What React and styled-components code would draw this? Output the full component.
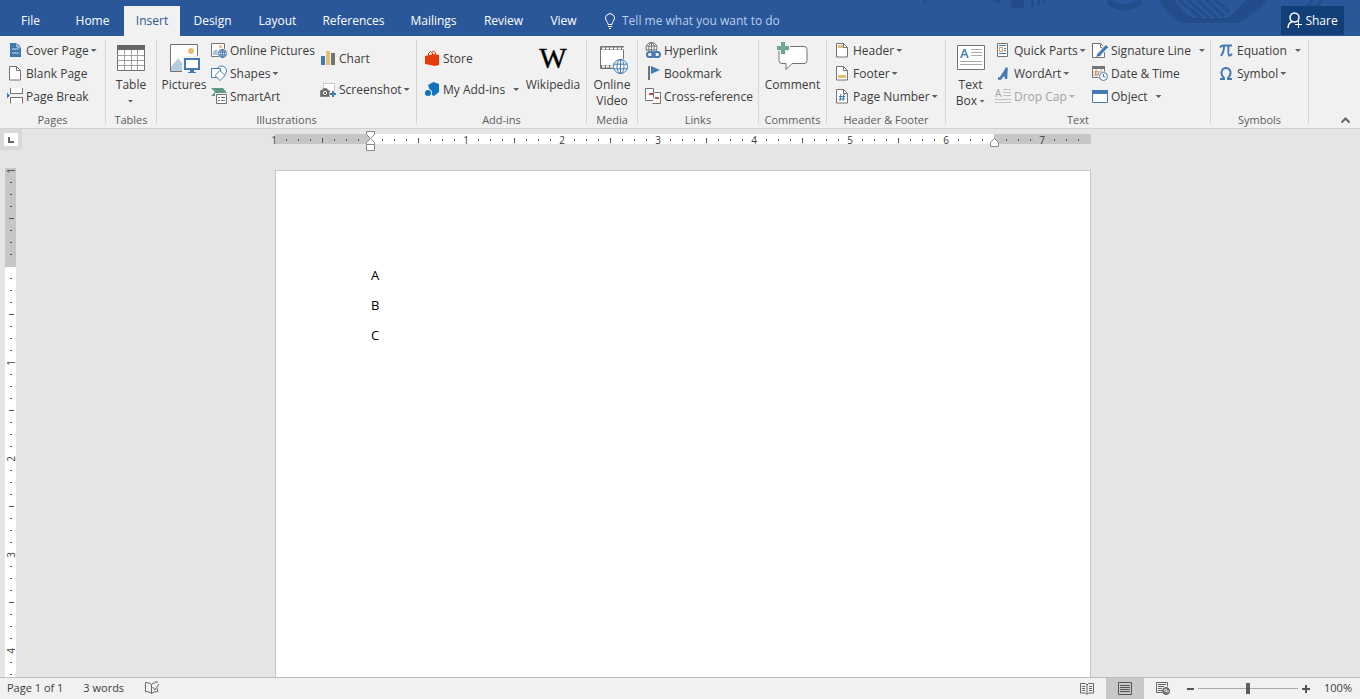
import React from 'react';
import styled, { createGlobalStyle } from 'styled-components';

const BLUE = '#4579b2';
const GRAY = '#737373';

const GlobalStyle = createGlobalStyle`
  * { box-sizing: border-box; }
  body {
    margin: 0;
    background: #e5e5e5;
    color: #3c3c3c;
    font: 12px/16px 'Open Sans', 'Noto Sans', sans-serif;
  }
  button, input { font: inherit; color: inherit; }
`;

const Window = styled.div`
  display: flex;
  flex-direction: column;
  height: 100vh;
  overflow: hidden;
`;

const TitleBar = styled.header`
  position: relative;
  display: flex;
  flex: none;
  align-items: stretch;
  height: 36px;
  padding: 6px 16px 0 0;
  background: #2a579a;
  color: #fff;
`;

const Ornament = styled.svg`
  position: absolute;
  top: 0;
  right: 0;
  width: 440px;
  height: 36px;
`;

const TabList = styled.nav`
  display: flex;
`;

const Tab = styled.button`
  width: ${(p) => p.$width}px;
  padding: 0;
  border: 0;
  white-space: nowrap;
  background: ${(p) => (p.$active ? '#f1f1f1' : 'transparent')};
  color: ${(p) => (p.$active ? '#2a579a' : '#fff')};
`;

const TellMe = styled.label`
  display: flex;
  align-items: center;
  gap: 5px;
  padding-left: 13px;
`;

const TellMeInput = styled.input`
  width: 200px;
  padding: 0;
  border: 0;
  outline: 0;
  background: transparent;
  &::placeholder { color: #b9cdea; opacity: 1; }
`;

const ShareButton = styled.button`
  position: relative;
  display: flex;
  align-items: center;
  justify-content: center;
  gap: 2px;
  width: 63px;
  height: 29px;
  margin-left: auto;
  padding: 0;
  border: 0;
  background: #123f78;
  color: #fff;
`;

const Ribbon = styled.div`
  display: flex;
  flex: none;
  height: 93px;
  background: #f1f1f1;
  border-bottom: 1px solid #d2d2d2;
`;

const Group = styled.section`
  position: relative;
  display: flex;
  flex: none;
  flex-direction: column;
  width: ${(p) => p.$width}px;
  padding: 3px 1px 0 0;
  &::after {
    content: '';
    position: absolute;
    top: 4px;
    right: 0;
    width: 1px;
    height: 84px;
    background: #d5d5d5;
  }
`;

const GroupBody = styled.div`
  display: flex;
  height: 73px;
  padding-left: ${(p) => p.$inset || 0}px;
`;

const GroupName = styled.h2`
  margin: 0;
  color: #5c5c5c;
  font-size: 11px;
  font-weight: 400;
  line-height: 16px;
  text-align: center;
  white-space: nowrap;
`;

const Column = styled.div`
  display: flex;
  flex: none;
  flex-direction: column;
  width: ${(p) => p.$width}px;
  padding-top: ${(p) => (p.$roomy ? 4 : 0)}px;
`;

const SmallButton = styled.button`
  display: flex;
  flex: none;
  align-items: center;
  gap: 3px;
  height: ${(p) => (p.$roomy ? 31 : 23)}px;
  padding: 0;
  border: 0;
  background: transparent;
  color: ${(p) => (p.disabled ? '#a3a3a3' : 'inherit')};
  white-space: nowrap;
  svg { flex: none; }
`;

const Caret = styled.i`
  width: 6px;
  height: 3px;
  margin-left: ${(p) => (p.$split ? 5 : -1)}px;
  background: currentColor;
  opacity: 0.8;
  clip-path: polygon(0 0, 100% 0, 50% 100%);
`;

const BigButton = styled.button`
  display: flex;
  flex: none;
  flex-direction: column;
  align-items: center;
  width: ${(p) => p.$width}px;
  padding: 3px 0 0;
  border: 0;
  background: transparent;
  white-space: nowrap;
  svg { flex: none; margin-bottom: 3px; }
`;

const BigLine = styled.span`
  display: flex;
  align-items: center;
  gap: 3px;
  height: 16px;
`;

const CollapseButton = styled.button`
  display: flex;
  align-self: flex-end;
  align-items: center;
  margin: 0 9px 0 auto;
  padding: 4px 0;
  border: 0;
  background: transparent;
`;

const Workspace = styled.main`
  display: grid;
  flex: 1;
  grid-template-columns: 22px 1fr;
  grid-template-rows: 39px minmax(0, 1fr);
  min-height: 0;
  overflow: hidden;
`;

const TabStop = styled.button`
  display: flex;
  align-items: center;
  justify-content: center;
  width: 22px;
  height: 21px;
  padding: 0;
  border: 4px solid #d9d9d9;
  background: #fff;
`;

const RulerRow = styled.div`
  display: flex;
  justify-content: center;
  padding: 5px 16px 0 0;
`;

const Ruler = styled.div`
  position: relative;
  display: flex;
  width: 816px;
  height: 10px;
  background: linear-gradient(to right, #c6c6c6 95px, #fff 95px 719px, #c6c6c6 719px);
`;

const RulerCells = styled.div`
  display: flex;
  margin-left: -7px;
`;

const RulerCell = styled.span`
  display: flex;
  flex: none;
  align-items: center;
  justify-content: center;
  width: 12px;
  height: 12px;
  font-size: 10px;
  line-height: 12px;
`;

const Tick = styled.i`
  width: 1px;
  height: ${(p) => (p.$half ? 5 : 2)}px;
  background: #555;
`;

const Marker = styled.svg`
  position: absolute;
  top: ${(p) => p.$top}px;
  left: ${(p) => p.$left}px;
`;

const SideRuler = styled.div`
  width: 11px;
  height: 100%;
  margin-left: 5px;
  background: linear-gradient(to bottom, #c6c6c6 99px, #fff 99px);
`;

const SideCells = styled.div`
  display: flex;
  flex-direction: column;
  width: 12px;
  margin-top: -3px;
  ${RulerCell} { transform: rotate(-90deg); }
`;

const PageArea = styled.div`
  display: flex;
  justify-content: center;
  min-height: 0;
  padding: 2px 16px 0 0;
`;

const Paper = styled.article`
  width: 816px;
  padding: 89px 95px 0;
  border: 1px solid #c6c6c6;
  border-bottom: 0;
  background: #fff;
  color: #000;
  font-size: 13px;
  line-height: 30px;
  p { margin: 0; }
`;

const StatusBar = styled.footer`
  display: flex;
  flex: none;
  align-items: center;
  height: 22px;
  padding: 0 8px 0 7px;
  border-top: 1px solid #bdbdbd;
  background: #f1f1f1;
  font-size: 11px;
`;

const StatusButton = styled.button`
  display: flex;
  align-items: center;
  margin-right: 20px;
  padding: 0 0 2px;
  border: 0;
  background: transparent;
  white-space: nowrap;
`;

const ViewSwitch = styled.div`
  display: flex;
  height: 21px;
  margin-left: auto;
`;

const ViewButton = styled.button`
  display: flex;
  align-items: center;
  justify-content: center;
  width: 38px;
  padding: 0;
  border: 0;
  background: ${(p) => (p.$active ? '#c8c8c8' : 'transparent')};
`;

const ZoomControls = styled.div`
  display: flex;
  align-items: center;
  gap: 4px;
  padding-left: 5px;
`;

const ZoomStep = styled.button`
  display: flex;
  padding: 0;
  border: 0;
  background: transparent;
`;

const ZoomRange = styled.input`
  width: 100px;
  height: 12px;
  margin: 0;
  appearance: none;
  background: linear-gradient(#a9a9a9, #a9a9a9) center / 100% 1px no-repeat;
  &::-webkit-slider-thumb {
    appearance: none;
    width: 4px;
    height: 11px;
    background: #5e5e5e;
  }
`;

const ZoomValue = styled.button`
  width: 30px;
  margin-left: 8px;
  padding: 0 0 2px;
  border: 0;
  background: transparent;
  text-align: right;
  white-space: nowrap;
`;

const Small = ({ children }) => (
  <svg width="16" height="17" viewBox="0 0 16 17" fill="none" aria-hidden="true">{children}</svg>
);
const Big = ({ children }) => (
  <svg width="32" height="32" viewBox="0 0 32 32" fill="none" aria-hidden="true">{children}</svg>
);

const Sheet = ({ children }) => (
  <Small>
    <path d="M2.500 1.500h7l4 4v9.500h-11z" fill="#fff" stroke={GRAY} />
    <path d="M9.500 1.500v4h4" stroke={GRAY} />
    {children}
  </Small>
);

const Globe = ({ cx, cy, r, color = BLUE }) => (
  <g stroke={color} fill="none">
    <circle cx={cx} cy={cy} r={r + 1} fill="#f1f1f1" stroke="none" />
    <circle cx={cx} cy={cy} r={r} fill="#fff" />
    <ellipse cx={cx} cy={cy} rx={r / 2} ry={r} />
    <path d={`M${cx} ${cy - r}v${2 * r}M${cx - r} ${cy - r / 3}h${2 * r}M${cx - r} ${cy + r / 3}h${2 * r}`} />
  </g>
);

const icons = {
  cover: (
    <Small>
      <path d="M3 1h7l4 4v10h-11z" fill="#3f76ad" />
      <path d="M10 1v4h4" stroke="#f1f1f1" />
      <path d="M5 7.500l1.500-1 1.500 1 1.500-1 1.500 1 1-1M5 10.500l1.500 1 1.500-1 1.500 1 1.500-1 1 1" stroke="#dbe8f4" />
    </Small>
  ),
  blank: <Sheet />,
  pageBreak: (
    <Small>
      <path d="M4 0h11v5h-11zM4 10h11v5h-11z" fill="#fff" />
      <path d="M3.500 0v5.500M15.500 0v5.500M3 5.500h13M3.500 15.500v-6M15.500 15.500v-6M3 9.500h13" stroke={GRAY} />
      <path d="M0 4.500l3 3-3 3z" fill={BLUE} />
    </Small>
  ),
  table: (
    <Big>
      <path d="M2.500 3.500h27v25h-27z" fill="#fff" stroke={GRAY} />
      <path d="M2 3h28v5h-28z" fill="#666" />
      <path d="M3 13.500h26M3 18.500h26M3 23.500h26M9.500 8v20M16.500 8v20M22.500 8v20" stroke="#a0a0a0" />
    </Big>
  ),
  pictures: (
    <Big>
      <path d="M2.500 2.500h27v27h-27z" fill="#fff" stroke={GRAY} />
      <circle cx="23" cy="9" r="3" fill="#e8bd72" />
      <path d="M3 25l7-9 6 7v6h-13z" fill="#b9cde1" />
      <path d="M14 14h18v18h-18z" fill="#f1f1f1" />
      <path d="M17 17h14v10h-14z" fill="#fff" stroke={BLUE} strokeWidth="2" />
      <path d="M22 28h4v2h2v1h-8v-1h2z" fill={BLUE} />
    </Big>
  ),
  onlinePictures: (
    <Small>
      <path d="M.5 1.500h13v13h-13z" fill="#fff" stroke={GRAY} />
      <circle cx="9.500" cy="4.500" r="1.500" fill="#e8bd72" />
      <path d="M2 13v-3l3-3 3 4v2z" fill="#a9c2dc" />
      <Globe cx={11.500} cy={11.500} r={4} />
    </Small>
  ),
  shapes: (
    <Small>
      <circle cx="10.500" cy="6" r="5" fill="#fff" stroke={BLUE} />
      <path d="M.5 3.500h9v9h-9z" fill="#fff" stroke={BLUE} />
      <path d="M9 5.500l5 5-5 5-5-5z" fill="#fff" stroke={BLUE} />
    </Small>
  ),
  smartArt: (
    <Small>
      <path d="M0 0h12l4 5-2 3h-14l4-4z" fill="#5c9a83" />
      <path d="M4 5h12v12h-12z" fill="#f1f1f1" />
      <path d="M5.500 6.500h10v9h-10z" fill="#fff" stroke={GRAY} />
      <path d="M7 9.500h2M10 9.500h4M7 12.500h2M10 12.500h4" stroke={GRAY} />
    </Small>
  ),
  chart: (
    <Small>
      <path d="M1 6h4v9h-4z" fill={BLUE} />
      <path d="M6 1h4v14h-4z" fill="#e6bd77" />
      <path d="M11 3h4v12h-4z" fill={GRAY} />
    </Small>
  ),
  screenshot: (
    <Small>
      <path d="M3.500 2.500h11v9h-11z" fill="#fff" stroke="#999" strokeDasharray="1 1" />
      <path d="M0 9h2l1-2h4l1 2h2v7h-10z" fill="#666" stroke="#f1f1f1" strokeWidth=".5" />
      <circle cx="5" cy="12" r="1.700" fill="#666" stroke="#fff" />
      <path d="M12.500 10v6M9.500 13h6" stroke="#f1f1f1" strokeWidth="4" />
      <path d="M13 10v6M10 13h6" stroke={BLUE} strokeWidth="2" />
    </Small>
  ),
  store: (
    <Small>
      <path d="M1 6l9-2 5 1v10l-4 1-10-2z" fill="#e63c0b" />
      <path d="M4.500 6v-2.500l2-2 2 1.500v2M7.500 2.500l2-1.500 2 1.500v2" stroke="#e63c0b" />
    </Small>
  ),
  addins: (
    <Small>
      <path d="M9.500 1l5.500 2v8l-5 4-4-2-1-6-1-3z" fill="#1172bd" />
      <circle cx="4" cy="12" r="4" fill="#f1f1f1" />
      <circle cx="4" cy="12" r="3" fill="#1172bd" />
    </Small>
  ),
  wikipedia: (
    <Big>
      <text x="16" y="26" fill="#000" stroke="#000" strokeWidth=".4" fontFamily="Liberation Serif, serif" fontSize="29" textAnchor="middle">W</text>
    </Big>
  ),
  video: (
    <Big>
      <path d="M4.500 4.500h23v22h-23z" fill="#fff" stroke={GRAY} />
      <path d="M5 6.500h23M5 24.500h23" stroke={GRAY} strokeWidth="3" />
      <path d="M6 6.500h22M6 24.500h22" stroke="#fff" strokeWidth="2" strokeDasharray="3 1" />
      <Globe cx={24.500} cy={24.500} r={7} />
    </Big>
  ),
  hyperlink: (
    <Small>
      <Globe cx={6.500} cy={6} r={5.500} color={GRAY} />
      <path d="M0 9h16v8h-16z" fill="#f1f1f1" />
      <rect x="2" y="10" width="7" height="5" rx="2.500" stroke={BLUE} strokeWidth="2" />
      <rect x="8" y="10" width="7" height="5" rx="2.500" stroke={BLUE} strokeWidth="2" />
      <path d="M6 12.500h5" stroke={BLUE} strokeWidth="2" />
    </Small>
  ),
  bookmark: (
    <Small>
      <path d="M3 1h2v14h-2z" fill={GRAY} />
      <path d="M6 1l9 4-9 4z" fill={BLUE} />
    </Small>
  ),
  crossReference: (
    <Small>
      <path d="M.5.5h8v12h-8z" fill="#fff" stroke={GRAY} />
      <path d="M9.500 4.500h6v11h-8" fill="#fff" stroke={GRAY} />
      <path d="M7 13h2v2h-2z" fill="#fff" />
      <path d="M4 6h4M10 10h4" stroke="#c0504d" strokeWidth="2" />
    </Small>
  ),
  comment: (
    <Big>
      <path d="M5 4.500h22a3 3 0 0 1 3 3v11a3 3 0 0 1-3 3h-12l-6 6v-6h-4a3 3 0 0 1-3-3v-11a3 3 0 0 1 3-3z" fill="#fff" stroke={GRAY} />
      <path d="M3 0h6v3h4v6h-4v4h-6v-4h-3v-6h3z" fill="#f1f1f1" />
      <path d="M4 0h4v4h4v4h-4v4h-4v-4h-4v-4h4z" fill="#71a694" />
    </Big>
  ),
  header: <Sheet><path d="M4 3h5v3h-5z" fill="#e6bd77" /></Sheet>,
  footer: <Sheet><path d="M4 10h8v3h-8z" fill="#e6bd77" /></Sheet>,
  pageNumber: <Sheet><path d="M7 6l-1 7M10 6l-1 7M5 8.500h6M5 11h6" stroke="#3f76ad" /></Sheet>,
  textBox: (
    <Big>
      <path d="M2.500 3.500h27v24h-27z" fill="#fff" stroke={GRAY} />
      <text x="5" y="16" fill={BLUE} fontFamily="Open Sans, sans-serif" fontWeight="600" fontSize="13">A</text>
      <path d="M16 7.500h11M16 10.500h11M16 13.500h11M5 19.500h22M5 22.500h22" stroke="#aaa" />
    </Big>
  ),
  quickParts: (
    <Small>
      <path d="M2.500 1.500h10v13h-10z" fill="#fff" stroke={GRAY} />
      <path d="M4 3.500h7M9 6.500h2M9 8.500h2M4 11.500h7" stroke="#3f76ad" />
      <path d="M4.500 5.500h3v4h-3z" fill="#fff" stroke="#dd9c45" />
    </Small>
  ),
  wordArt: (
    <Small>
      <path d="M3 13.500h2.500L12 3.500M11.500 2.500l-.5 11.500M7 10.500h4" stroke={BLUE} strokeWidth="2.500" />
    </Small>
  ),
  dropCap: (
    <Small>
      <text x="0" y="9" fill="#a3a3a3" fontFamily="Open Sans, sans-serif" fontSize="10">A</text>
      <path d="M8 1.500h8M8 4.500h8M8 7.500h8M0 11.500h16M0 14.500h16" stroke="#c4c4c4" />
    </Small>
  ),
  signature: (
    <Small>
      <path d="M.5 1.500h8l4 4v10h-12z" fill="#fff" stroke={GRAY} />
      <path d="M8.500 1.500v4h4" stroke={GRAY} />
      <path d="M6 13.500L15 4" stroke="#f1f1f1" strokeWidth="5" />
      <path d="M7 12.500L15 4" stroke={BLUE} strokeWidth="3" />
      <path d="M4 15l2-4 3 2.500z" fill={BLUE} />
    </Small>
  ),
  date: (
    <Small>
      <path d="M.5 1.500h12v11h-12z" fill="#fff" stroke={GRAY} />
      <path d="M0 1h13v3h-13z" fill={GRAY} />
      <path d="M1 7h11M1 10h11M4 4v8M9 4v8" stroke="#aaa" />
      <path d="M3.500 6.500h3v3h-3z" stroke="#d8904a" />
      <circle cx="11.500" cy="11.500" r="5" fill="#f1f1f1" />
      <circle cx="11.500" cy="11.500" r="4" fill="#fff" stroke={BLUE} />
      <path d="M11.500 9v3h2" stroke={BLUE} />
    </Small>
  ),
  object: (
    <Small>
      <path d="M.5 2.500h15v12h-15z" fill="#fff" stroke={BLUE} />
      <path d="M0 2h16v4h-16z" fill={BLUE} />
    </Small>
  ),
  equation: (
    <Small>
      <path d="M2 5.500Q3 3.500 5 3.500H14M6 4Q6 10 3 14M10.500 4Q10 13 11 13.500T14 12" stroke={BLUE} strokeWidth="2" />
    </Small>
  ),
  symbol: (
    <Small>
      <path d="M2 14h4v-1Q3 10 3.500 7 4.500 3 8 3t4.500 4q.5 3-2.500 6v1h4" stroke={BLUE} strokeWidth="2" />
    </Small>
  ),
};

function Command({ icon, label, menu, split, roomy, disabled }) {
  return (
    <SmallButton type="button" $roomy={roomy} disabled={disabled}>
      {icons[icon]}
      {label}
      {menu && <Caret $split={split} />}
    </SmallButton>
  );
}

function BigCommand({ icon, lines, width, menu, menuBelow }) {
  return (
    <BigButton type="button" $width={width}>
      {icons[icon]}
      {lines.map((line, i) => (
        <BigLine key={line}>
          {line}
          {menu && i === lines.length - 1 && <Caret />}
        </BigLine>
      ))}
      {menuBelow && <BigLine><Caret /></BigLine>}
    </BigButton>
  );
}

const tabs = [
  ['File', 61], ['Home', 63], ['Insert', 56], ['Design', 65], ['Layout', 65],
  ['References', 87], ['Mailings', 73], ['Review', 67], ['View', 53],
];

const groups = [
  { name: 'Pages', width: 106, inset: 7, parts: [
    { width: 98, items: [
      { icon: 'cover', label: 'Cover Page', menu: true },
      { icon: 'blank', label: 'Blank Page' },
      { icon: 'pageBreak', label: 'Page Break' },
    ] },
  ] },
  { name: 'Tables', width: 51, parts: [{ big: 'table', lines: ['Table'], width: 50, menuBelow: true }] },
  { name: 'Illustrations', width: 260, parts: [
    { big: 'pictures', lines: ['Pictures'], width: 54 },
    { width: 109, items: [
      { icon: 'onlinePictures', label: 'Online Pictures' },
      { icon: 'shapes', label: 'Shapes', menu: true },
      { icon: 'smartArt', label: 'SmartArt' },
    ] },
    { width: 96, roomy: true, items: [
      { icon: 'chart', label: 'Chart' },
      { icon: 'screenshot', label: 'Screenshot', menu: true },
    ] },
  ] },
  { name: 'Add-ins', width: 170, inset: 7, parts: [
    { width: 101, roomy: true, items: [
      { icon: 'store', label: 'Store' },
      { icon: 'addins', label: 'My Add-ins', menu: true, split: true },
    ] },
    { big: 'wikipedia', lines: ['Wikipedia'], width: 56 },
  ] },
  { name: 'Media', width: 51, parts: [{ big: 'video', lines: ['Online', 'Video'], width: 50 }] },
  { name: 'Links', width: 121, inset: 7, parts: [
    { width: 113, items: [
      { icon: 'hyperlink', label: 'Hyperlink' },
      { icon: 'bookmark', label: 'Bookmark' },
      { icon: 'crossReference', label: 'Cross-reference' },
    ] },
  ] },
  { name: 'Comments', width: 68, parts: [{ big: 'comment', lines: ['Comment'], width: 67 }] },
  { name: 'Header & Footer', width: 119, inset: 7, parts: [
    { width: 111, items: [
      { icon: 'header', label: 'Header', menu: true },
      { icon: 'footer', label: 'Footer', menu: true },
      { icon: 'pageNumber', label: 'Page Number', menu: true },
    ] },
  ] },
  { name: 'Text', width: 265, parts: [
    { big: 'textBox', lines: ['Text', 'Box'], width: 49, menu: true },
    { width: 97, items: [
      { icon: 'quickParts', label: 'Quick Parts', menu: true },
      { icon: 'wordArt', label: 'WordArt', menu: true },
      { icon: 'dropCap', label: 'Drop Cap', menu: true, disabled: true },
    ] },
    { width: 117, items: [
      { icon: 'signature', label: 'Signature Line', menu: true, split: true },
      { icon: 'date', label: 'Date & Time' },
      { icon: 'object', label: 'Object', menu: true, split: true },
    ] },
  ] },
  { name: 'Symbols', width: 98, inset: 7, parts: [
    { width: 90, items: [
      { icon: 'equation', label: 'Equation', menu: true, split: true },
      { icon: 'symbol', label: 'Symbol', menu: true },
    ] },
  ] },
];

// One cell per eighth of an inch; the margin ends at the eighth cell.
function Cells({ count }) {
  return Array.from({ length: count }, (_, i) => {
    const eighths = i - 8;
    if (eighths === 0) return <RulerCell key={i} />;
    if (eighths % 8 === 0) return <RulerCell key={i}>{Math.abs(eighths / 8)}</RulerCell>;
    return <RulerCell key={i}><Tick $half={eighths % 4 === 0} /></RulerCell>;
  });
}

export default function App() {
  return (
    <Window>
      <GlobalStyle />
      <TitleBar>
        <Ornament viewBox="0 0 440 36" fill="none" aria-hidden="true">
          <g fill="#234c8b">
            <path d="M3 0h4v3h-4zM72 0h8v4zM91 0h13v8h-13zM111 0h3v7h-3zM117 0h3v6h-3zM123 0h2v4h-2z" />
            <path fillRule="evenodd" d="M239 0h108Q334 15 319 23h-59Q246 14 239 0zM254 0q6 11 19 18h33q12-7 20-18z" />
          </g>
          <path d="M189 0a16 10 0 0 0 31 0" stroke="#234c8b" strokeWidth="6" />
          <path d="M259 0l22 18M268 0l21 18M277 0l20 18M286 0l18 16M295 0l14 12" stroke="#234c8b" strokeWidth="3" />
          <path d="M393 0l-10 11M402 0l-10 11" stroke="#234c8b" strokeWidth="3" />
        </Ornament>
        <TabList aria-label="Ribbon tabs">
          {tabs.map(([name, width]) => (
            <Tab key={name} type="button" $width={width} $active={name === 'Insert'}>{name}</Tab>
          ))}
        </TabList>
        <TellMe>
          <svg width="14" height="17" viewBox="0 0 14 17" fill="none" stroke="#fff" aria-hidden="true">
            <path d="M5 11.500q0-2-1.500-3.500a4.500 4.500 0 1 1 7 0q-1.500 1.500-1.500 3.500zM5 13.500h4M6 15.500h2" />
          </svg>
          <TellMeInput type="text" placeholder="Tell me what you want to do" aria-label="Tell me what you want to do" />
        </TellMe>
        <ShareButton type="button">
          <svg width="16" height="17" viewBox="0 0 16 17" fill="none" stroke="#fff" aria-hidden="true">
            <circle cx="7.500" cy="5.500" r="4.500" strokeWidth="1.500" />
            <path d="M1 16q0-5 4.500-6.500" strokeWidth="1.500" />
            <path d="M11.500 9v7M8 12.500h7" />
          </svg>
          Share
        </ShareButton>
      </TitleBar>

      <Ribbon>
        {groups.map((group) => (
          <Group key={group.name} $width={group.width}>
            <GroupBody $inset={group.inset}>
              {group.parts.map((part, i) => (part.big ? (
                <BigCommand key={part.big} icon={part.big} {...part} />
              ) : (
                <Column key={i} $width={part.width} $roomy={part.roomy}>
                  {part.items.map((item) => <Command key={item.icon} roomy={part.roomy} {...item} />)}
                </Column>
              )))}
            </GroupBody>
            <GroupName>{group.name}</GroupName>
          </Group>
        ))}
        <CollapseButton type="button" aria-label="Collapse the ribbon">
          <svg width="11" height="8" viewBox="0 0 11 8" fill="none" aria-hidden="true">
            <path d="M1.500 6.500l4-4 4 4" stroke="#666" strokeWidth="2" />
          </svg>
        </CollapseButton>
      </Ribbon>

      <Workspace>
        <TabStop type="button" aria-label="Left tab">
          <svg width="8" height="8" viewBox="0 0 8 8" fill="none" aria-hidden="true">
            <path d="M2 1v5h5" stroke="#666" strokeWidth="2" />
          </svg>
        </TabStop>
        <RulerRow>
          <Ruler>
            <RulerCells><Cells count={68} /></RulerCells>
            <Marker $left={90} $top={-4} width="11" height="23" viewBox="0 0 11 23" fill="#fff" stroke="#888">
              <path d="M1.500 1.500h8v3l-4 4-4-4zM5.500 8.500l4 4v2h-8v-2zM1.500 14.500h8v6h-8z" />
            </Marker>
            <Marker $left={714} $top={3} width="11" height="11" viewBox="0 0 11 11" fill="#fff" stroke="#888">
              <path d="M5.500 1.500l4 4v4h-8v-4z" />
            </Marker>
          </Ruler>
        </RulerRow>
        <SideRuler>
          <SideCells><Cells count={43} /></SideCells>
        </SideRuler>
        <PageArea>
          <Paper>
            <p>A</p>
            <p>B</p>
            <p>C</p>
          </Paper>
        </PageArea>
      </Workspace>

      <StatusBar>
        <StatusButton type="button">Page 1 of 1</StatusButton>
        <StatusButton type="button">3 words</StatusButton>
        <StatusButton type="button" aria-label="Proofing">
          <svg width="16" height="14" viewBox="0 0 16 14" fill="none" stroke="#666" aria-hidden="true">
            <path d="M7.500 12.500q-2-2-6-2v-9q4 0 6 2zM7.500 3.500q1-1.500 4-2M7.500 12.500q2-2 6-2v-3M8.500 6l2.500 3 4-6M14 1h-3" />
          </svg>
        </StatusButton>
        <ViewSwitch>
          <ViewButton type="button" aria-label="Read mode">
            <svg width="14" height="13" viewBox="0 0 14 13" fill="none" stroke="#666" aria-hidden="true">
              <path d="M7 12.500l-1.500-1.500h-5v-9.500h5l1.500 1.500 1.500-1.500h5v9.500h-5zM7 3v9M2 4.500h3M2 6.500h3M2 8.500h3M9 4.500h3M9 6.500h3M9 8.500h3" />
            </svg>
          </ViewButton>
          <ViewButton type="button" $active aria-label="Print layout">
            <svg width="14" height="13" viewBox="0 0 14 13" fill="none" stroke="#555" aria-hidden="true">
              <path d="M.5.5h13v12h-13zM2 3.500h10M2 5.500h10M2 7.500h10M2 9.500h10" />
            </svg>
          </ViewButton>
          <ViewButton type="button" aria-label="Web layout">
            <svg width="14" height="13" viewBox="0 0 14 13" fill="none" stroke="#666" aria-hidden="true">
              <path d="M6 10.500h-5.500v-10h11v4M2 2.500h8M2 4.500h6M2 6.500h4M2 8.500h4" />
              <circle cx="10" cy="9" r="3.500" fill="#777" />
              <path d="M8 8l2-1 1 2-1 1zM11 10l2-1" stroke="#ddd" />
            </svg>
          </ViewButton>
        </ViewSwitch>
        <ZoomControls>
          <ZoomStep type="button" aria-label="Zoom out">
            <svg width="7" height="8" viewBox="0 0 7 8" aria-hidden="true"><path d="M0 3h7v2h-7z" fill="#555" /></svg>
          </ZoomStep>
          <ZoomRange type="range" min="0" max="100" defaultValue="50" aria-label="Zoom" />
          <ZoomStep type="button" aria-label="Zoom in">
            <svg width="8" height="8" viewBox="0 0 8 8" aria-hidden="true"><path d="M0 3h3v-3h2v3h3v2h-3v3h-2v-3h-3z" fill="#555" /></svg>
          </ZoomStep>
          <ZoomValue type="button">100%</ZoomValue>
        </ZoomControls>
      </StatusBar>
    </Window>
  );
}
